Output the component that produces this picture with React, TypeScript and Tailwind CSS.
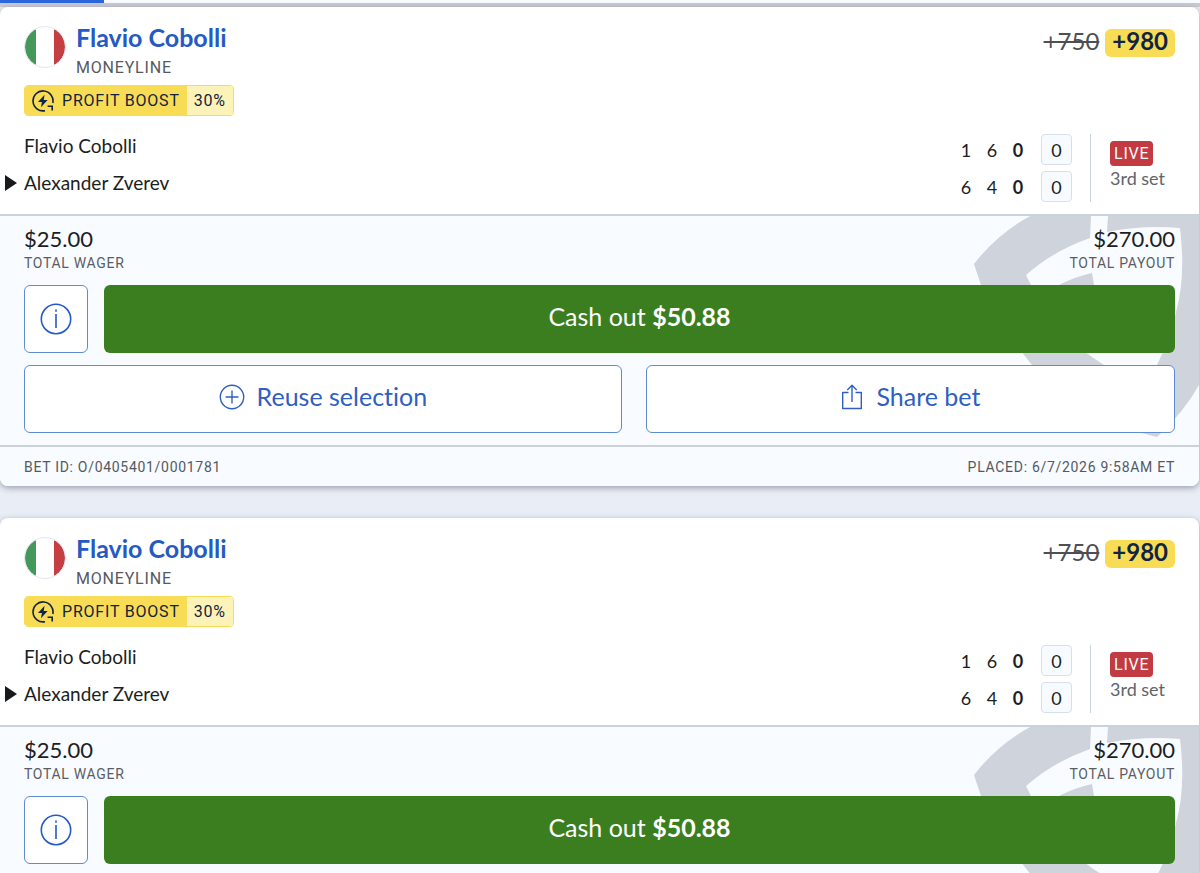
import { useId } from "react";

const bets = [
    { id: "O/0405401/0001781", placed: "6/7/2026 9:58AM ET" },
    { id: "O/0405401/0001781", placed: "6/7/2026 9:58AM ET" },
]

const players = [
    { name: "Flavio Cobolli", sets: [1, 6, 0], game: 0, serving: false },
    { name: "Alexander Zverev", sets: [6, 4, 0], game: 0, serving: true },
]

function ItalyFlag() {
    const clip = useId()
    return (
        <svg className="h-[42px] w-[42px] shrink-0" viewBox="0 0 42 42" role="img" aria-label="Italy">
            <clipPath id={clip}><circle cx="21" cy="21" r="20" /></clipPath>
            <g clipPath={`url(#${clip})`}>
                <path fill="#fff" d="M0 0h42v42H0z" />
                <path fill="#43985a" d="M0 0h12v42H0z" />
                <path fill="#c43e42" d="M30 0h12v42H30z" />
            </g>
            <circle cx="21" cy="21" r="20.5" fill="none" stroke="#e3e6ef" />
        </svg>
    )
}

function BoostIcon() {
    return (
        <svg className="h-[22px] w-[22px]" viewBox="0 0 22 22" fill="none" stroke="#13233d" strokeWidth="1.6" aria-hidden="true">
            <path d="M13 20.7A10 10 0 1 1 20.8 13" />
            <path d="M15.6 16.2h4.6v4.4" />
            <path fill="#0c2554" stroke="none" d="M12.6 4.8 6 12h3.9L9 17.2l6.6-7.2h-3.9z" />
        </svg>
    )
}

function Shield() {
    return (
        <svg className="absolute top-0 right-0 h-[222px] w-[226px]" viewBox="0 1 226 222" fill="#ced3dc" aria-hidden="true">
            <path fillRule="evenodd" d="M59 0Q25 18 1 49L8 70Q24 107 59 150Q100 202 184 222Q211 197 226 170V0ZM118 1 117 23Q80 36 53 60L58 70Q82 120 131 150Q160 172 184 150Q198 122 203 97Q213 62 207 13Q170 10 134 17L135 1Z" />
            <path d="M86 70Q101 62 119 58L121 70L123 90H75Z" />
        </svg>
    )
}

function BetCard({ bet }: { bet: (typeof bets)[number] }) {
    return (
        <article className="overflow-hidden rounded-lg bg-white shadow-[0_2px_6px_rgba(60,66,84,0.45)]">
            <div className="flex items-start justify-between px-6 pt-[19px]">
                <div className="flex items-start">
                    <ItalyFlag />
                    <div className="ml-[10px]">
                        <h2 className="text-[25px] leading-[22px] font-bold text-[#2559c4]">Flavio Cobolli</h2>
                        <p className="mt-[10px] font-[Roboto,sans-serif] text-base leading-5 tracking-wider text-[#55595f]">MONEYLINE</p>
                    </div>
                </div>
                <div className="mt-[3px] flex items-start gap-[6px] text-2xl leading-6">
                    <s className="text-[#4d4f53]">+750</s>
                    <strong className="h-7 rounded-md bg-[#f8dc55] px-[7px] font-bold text-[#0f2444]">+980</strong>
                </div>
            </div>

            <div className="mt-[7px] ml-6 flex h-[31px] w-fit overflow-hidden rounded-sm border border-[#f8dc55] font-[Roboto,sans-serif] text-base text-[#13233d]">
                <span className="flex items-center gap-2 bg-[#f8dc55] px-[7px] tracking-wider"><BoostIcon />PROFIT BOOST</span>
                <span className="flex items-center bg-[#fdf3b8] px-[7px] tracking-wider">30%</span>
            </div>

            <div className="mt-[15px] flex px-6">
                <table className="flex-1 text-lg leading-6 text-[#1c1e22]">
                    <tbody>
                        {players.map((p) => (
                            <tr key={p.name} className="h-[37px]">
                                <th className="relative w-full pb-2 text-left text-[19px] font-normal">
                                    {p.serving && <svg className="absolute top-[7px] -left-[19px] h-4 w-3" viewBox="0 0 12 16" aria-label="Serving"><path fill="#17191c" d="M0 0l12 8L0 16z" /></svg>}
                                    {p.name}
                                </th>
                                {p.sets.map((s, i) => (
                                    <td key={i} className={`min-w-[26px] text-center ${i === 2 ? "font-bold" : ""}`}>{s}</td>
                                ))}
                                <td className="pl-[10px]">
                                    <div className="flex h-[31px] w-[31px] items-center justify-center rounded-sm border border-[#d6dfec] bg-[#f7fbff]">{p.game}</div>
                                </td>
                            </tr>
                        ))}
                    </tbody>
                </table>
                <div className="my-[3px] ml-[18px] w-[85px] border-l border-[#ccd3dc] pt-[7px] pl-[19px]">
                    <span className="block h-[25px] w-fit rounded-sm bg-[#c23a42] px-1 font-[Roboto,sans-serif] text-base leading-[25px] tracking-wider text-white">LIVE</span>
                    <p className="text-lg leading-6 whitespace-nowrap text-[#606469]">3rd set</p>
                </div>
            </div>

            <div className="relative mt-[9px] border-t-2 border-[#cbd2da] bg-[#f8fbff]">
                <Shield />
                <div className="relative px-6 pt-[9px] pb-3">
                    <dl className="flex justify-between">
                        <div className="flex flex-col-reverse">
                            <dt className="font-[Roboto,sans-serif] text-sm leading-5 tracking-wider text-[#5a5e64]">TOTAL WAGER</dt>
                            <dd className="text-[22px] leading-7 text-[#1c1e22]">$25.00</dd>
                        </div>
                        <div className="flex flex-col-reverse text-right">
                            <dt className="font-[Roboto,sans-serif] text-sm leading-5 tracking-wider text-[#5a5e64]">TOTAL PAYOUT</dt>
                            <dd className="text-[22px] leading-7 text-[#1c1e22]">$270.00</dd>
                        </div>
                    </dl>
                    <div className="mt-3 flex gap-4">
                        <button className="flex h-[68px] w-16 items-center justify-center rounded-md border border-[#5e8bd3] bg-white text-[#2559c4]" aria-label="Bet info">
                            <svg className="h-8 w-8" viewBox="0 0 32 32" fill="none" stroke="currentColor" strokeWidth="1.6">
                                <circle cx="16" cy="16" r="14.7" />
                                <path d="M16 11v14M16 6.5v2.3" />
                            </svg>
                        </button>
                        <button className="h-[68px] flex-1 rounded-md bg-[#3b7e20] pb-1 text-[25px] text-white">Cash out <b>$50.88</b></button>
                    </div>
                    <div className="mt-3 flex gap-6 text-[25px] text-[#2f5fc2]">
                        <button className="flex h-[68px] flex-auto items-center justify-center gap-3 rounded-md border border-[#5e8bd3] bg-white pb-1">
                            <svg className="h-[26px] w-[26px]" viewBox="0 0 26 26" fill="none" stroke="currentColor" strokeWidth="1.4" aria-hidden="true">
                                <circle cx="13" cy="13" r="11.7" />
                                <path d="M13 6.5v13M6.5 13h13" />
                            </svg>
                            Reuse selection
                        </button>
                        <button className="flex h-[68px] flex-auto items-center justify-center gap-3 rounded-md border border-[#5e8bd3] bg-white pb-1">
                            <svg className="h-[26px] w-6" viewBox="0 0 24 26" fill="none" stroke="currentColor" strokeWidth="1.4" strokeLinejoin="round" aria-hidden="true">
                                <path d="M8.5 8.5H2.7v16h18.6v-16h-5.8M12 18V1.5M7.3 6 12 1.3 16.7 6" />
                            </svg>
                            Share bet
                        </button>
                    </div>
                </div>
            </div>

            <footer className="flex h-[41px] items-center justify-between border-t-2 border-[#cbd2da] bg-[#f8fbff] px-6 font-[Roboto,sans-serif] text-sm tracking-wider text-[#55595f]">
                <span>BET ID: {bet.id}</span>
                <span>PLACED: {bet.placed}</span>
            </footer>
        </article>
    )
}

export default function App() {
    return (
        <div className="bg-[#e9edf5] font-[Lato,sans-serif] [font-variant-ligatures:none]">
            <div className="h-[7px] border-b-4 border-[#c9cad3] bg-[#f9fafe]">
                <div className="h-[3px] w-[104px] bg-[#2b66dd]"></div>
            </div>
            <main className="grid gap-8 pr-px pb-8">
                {bets.map((bet, i) => <BetCard key={i} bet={bet} />)}
            </main>
        </div>
    )
}
